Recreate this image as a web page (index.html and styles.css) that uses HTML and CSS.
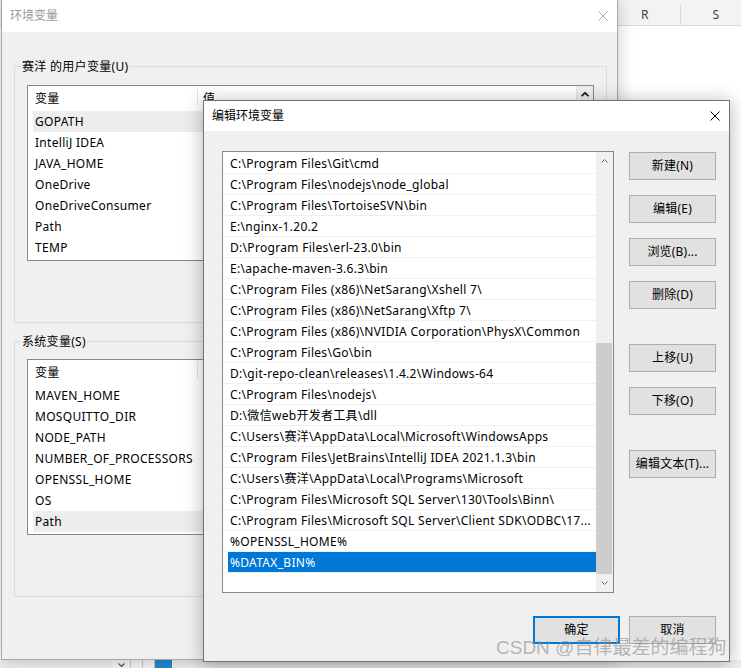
FILE: index.html
```html
<!DOCTYPE html>
<html lang="zh-CN">
<head>
<meta charset="utf-8">
<title>编辑环境变量</title>
<link rel="stylesheet" href="styles.css">
</head>
<body>
<div class="desktop">
  <div class="sheet-head">
    <div class="sheet-col">R</div>
    <div class="sheet-col">S</div>
  </div>
  <div class="sheet-body"></div>
  <div class="sheet-foot">
    <div class="foot-box foot-drop"><svg class="foot-chev" viewBox="0 0 7 4"><path d="M0.5 0.5L3.5 3.5L6.5 0.5"/></svg></div>
    <div class="foot-box foot-small"></div>
    <div class="foot-box foot-small"></div>
    <div class="foot-blue"></div>
  </div>

  <div class="win win-back">
    <div class="titlebar inactive">
      <span class="title">环境变量</span>
      <svg class="close" viewBox="0 0 10 10"><path d="M0.5 0.5L9.5 9.5M9.5 0.5L0.5 9.5"/></svg>
    </div>
    <div class="back-body">
      <div class="group group-user">
        <span class="group-label">赛洋 的用户变量(U)</span>
        <div class="listview">
          <div class="lv-main">
            <div class="lv-head">
              <div class="lv-col lv-name">变量</div>
              <div class="lv-sep"></div>
              <div class="lv-col lv-value">值</div>
            </div>
            <div class="lv-row sel">GOPATH</div>
            <div class="lv-row">IntelliJ IDEA</div>
            <div class="lv-row">JAVA_HOME</div>
            <div class="lv-row">OneDrive</div>
            <div class="lv-row">OneDriveConsumer</div>
            <div class="lv-row">Path</div>
            <div class="lv-row">TEMP</div>
          </div>
          <div class="lv-scroll">
            <div class="sb-btn"><svg class="chev bold" viewBox="0 0 7 4"><path d="M0.5 3.5L3.5 0.5L6.5 3.5"/></svg></div>
          </div>
        </div>
      </div>
      <div class="group group-sys">
        <span class="group-label">系统变量(S)</span>
        <div class="listview">
          <div class="lv-main">
            <div class="lv-head">
              <div class="lv-col lv-name">变量</div>
              <div class="lv-sep"></div>
              <div class="lv-col lv-value">值</div>
            </div>
            <div class="lv-row">MAVEN_HOME</div>
            <div class="lv-row">MOSQUITTO_DIR</div>
            <div class="lv-row">NODE_PATH</div>
            <div class="lv-row">NUMBER_OF_PROCESSORS</div>
            <div class="lv-row">OPENSSL_HOME</div>
            <div class="lv-row">OS</div>
            <div class="lv-row sel">Path</div>
          </div>
          <div class="lv-scroll"></div>
        </div>
      </div>
    </div>
  </div>

  <div class="win win-front">
    <div class="titlebar">
      <span class="title">编辑环境变量</span>
      <svg class="close" viewBox="0 0 10 10"><path d="M0.5 0.5L9.5 9.5M9.5 0.5L0.5 9.5"/></svg>
    </div>
    <div class="front-body">
      <div class="front-main">
        <div class="pathlist">
          <div class="pl-rows">
            <div class="pl-row"><div class="pl-text">C:\Program Files\Git\cmd</div></div>
            <div class="pl-row"><div class="pl-text">C:\Program Files\nodejs\node_global</div></div>
            <div class="pl-row"><div class="pl-text">C:\Program Files\TortoiseSVN\bin</div></div>
            <div class="pl-row"><div class="pl-text">E:\nginx-1.20.2</div></div>
            <div class="pl-row"><div class="pl-text">D:\Program Files\erl-23.0\bin</div></div>
            <div class="pl-row"><div class="pl-text">E:\apache-maven-3.6.3\bin</div></div>
            <div class="pl-row"><div class="pl-text">C:\Program Files (x86)\NetSarang\Xshell 7\</div></div>
            <div class="pl-row"><div class="pl-text">C:\Program Files (x86)\NetSarang\Xftp 7\</div></div>
            <div class="pl-row"><div class="pl-text">C:\Program Files (x86)\NVIDIA Corporation\PhysX\Common</div></div>
            <div class="pl-row"><div class="pl-text">C:\Program Files\Go\bin</div></div>
            <div class="pl-row"><div class="pl-text">D:\git-repo-clean\releases\1.4.2\Windows-64</div></div>
            <div class="pl-row"><div class="pl-text">C:\Program Files\nodejs\</div></div>
            <div class="pl-row"><div class="pl-text">D:\微信web开发者工具\dll</div></div>
            <div class="pl-row"><div class="pl-text">C:\Users\赛洋\AppData\Local\Microsoft\WindowsApps</div></div>
            <div class="pl-row"><div class="pl-text">C:\Program Files\JetBrains\IntelliJ IDEA 2021.1.3\bin</div></div>
            <div class="pl-row"><div class="pl-text">C:\Users\赛洋\AppData\Local\Programs\Microsoft</div></div>
            <div class="pl-row"><div class="pl-text">C:\Program Files\Microsoft SQL Server\130\Tools\Binn\</div></div>
            <div class="pl-row"><div class="pl-text">C:\Program Files\Microsoft SQL Server\Client SDK\ODBC\17...</div></div>
            <div class="pl-row"><div class="pl-text">%OPENSSL_HOME%</div></div>
            <div class="pl-row sel"><div class="pl-text">%DATAX_BIN%</div></div>
          </div>
          <div class="pl-scroll">
            <div class="sb-btn"><svg class="chev" viewBox="0 0 7 4"><path d="M0.5 3.5L3.5 0.5L6.5 3.5"/></svg></div>
            <div class="sb-track"><div class="sb-thumb"></div></div>
            <div class="sb-btn"><svg class="chev" viewBox="0 0 7 4"><path d="M0.5 0.5L3.5 3.5L6.5 0.5"/></svg></div>
          </div>
        </div>
        <div class="btn-col">
          <button class="btn">新建(N)</button>
          <button class="btn">编辑(E)</button>
          <button class="btn">浏览(B)...</button>
          <button class="btn">删除(D)</button>
          <button class="btn btn-gap">上移(U)</button>
          <button class="btn">下移(O)</button>
          <button class="btn btn-gap">编辑文本(T)...</button>
        </div>
      </div>
      <div class="front-foot">
        <button class="btn btn-default">确定</button>
        <button class="btn">取消</button>
      </div>
    </div>
  </div>

  <div class="watermark">CSDN @自律最差的编程狗</div>
</div>
</body>
</html>
```

FILE: styles.css
```css
* { box-sizing: border-box; }
html, body { margin: 0; padding: 0; }
body {
  width: 741px;
  height: 668px;
  overflow: hidden;
  background: #fff;
  color: #000;
  font-family: "Noto Sans", "Noto Sans CJK SC", sans-serif;
  font-size: 12px;
  line-height: 1.4;
  letter-spacing: 0.3px;
}
.desktop {
  position: relative;
  width: 741px;
  height: 668px;
  display: flex;
  flex-direction: column;
  overflow: hidden;
}

/* spreadsheet behind the dialogs */
.sheet-head {
  flex: none;
  height: 26px;
  background: #f3f3f3;
  border-bottom: 1px solid #d8d8d8;
  display: flex;
  align-items: flex-end;
  padding-left: 610px;
}
.sheet-col {
  flex: none;
  width: 71px;
  height: 20px;
  line-height: 20px;
  border-right: 1px solid #d8d8d8;
  text-align: center;
  color: #444;
  font-size: 12px;
}
.sheet-body { flex: 1; }
.sheet-foot {
  flex: none;
  height: 8px;
  background: #f0f0f0;
  display: flex;
  padding-left: 112px;
}
.foot-box {
  background: #f8f8f8;
  border-right: 1px solid #c8c8c8;
}
.foot-drop {
  width: 19px;
  display: flex;
  justify-content: center;
  padding-top: 3px;
}
.foot-chev {
  width: 7px;
  height: 4px;
  display: block;
  fill: none;
  stroke: #555;
  stroke-width: 1.2;
}
.foot-small { width: 12px; }
.foot-blue {
  width: 17px;
  background: #1f8ad2;
}

/* windows */
.win {
  position: absolute;
  display: flex;
  flex-direction: column;
  background: #f0f0f0;
}
.win-back {
  left: 1px;
  top: -1px;
  width: 617px;
  height: 661px;
  border: 1px solid #a8a8a8;
  box-shadow: 0 2px 16px rgba(0, 0, 0, 0.22);
}
.win-front {
  left: 203px;
  top: 100px;
  width: 527px;
  height: 562px;
  border: 1px solid #737373;
  box-shadow: 0 2px 18px rgba(0, 0, 0, 0.3);
}
.titlebar {
  flex: none;
  background: #fff;
  display: flex;
  align-items: center;
  padding: 0 9px 0 8px;
}
.win-back .titlebar { height: 32px; }
.win-front .titlebar { height: 30px; }
.title { font-size: 12px; line-height: 16px; letter-spacing: 0; }
.inactive .title { color: #999; }
.close {
  margin-left: auto;
  width: 10px;
  height: 10px;
  display: block;
  fill: none;
  stroke: #000;
  stroke-width: 1;
}
.inactive .close { stroke: #a6a6a6; }

/* back dialog */
.back-body {
  padding: 34px 0 0 12px;
}
.group {
  border: 1px solid #dcdcdc;
  width: 593px;
  padding: 0 12px;
}
.group-user { height: 257px; }
.group-sys { height: 256px; margin-top: 18px; }
.group-label {
  display: block;
  width: fit-content;
  margin: -9px 0 0 -6px;
  padding: 0 1px;
  background: #f0f0f0;
  line-height: 17px;
}
.group-user .listview { margin-top: 10px; }
.group-sys .listview { margin-top: 9px; }
.listview {
  height: 176px;
  border: 1px solid #828790;
  background: #fff;
  display: flex;
}
.lv-main { flex: 1; min-width: 0; }
.lv-head {
  height: 25px;
  display: flex;
  align-items: flex-start;
}
.lv-col { line-height: 25px; }
.lv-name { width: 169px; padding-left: 7px; }
.lv-sep {
  width: 1px;
  height: 18px;
  margin-top: 1px;
  background: #e3e3e3;
}
.lv-value { padding-left: 5px; }
.lv-row {
  height: 21px;
  line-height: 21px;
  margin-left: 5px;
  padding-left: 2px;
  white-space: nowrap;
}
.lv-row.sel { background: #ededed; }
.lv-scroll {
  width: 17px;
  background: #f0f0f0;
  border-left: 1px solid #e6e6e6;
}

/* scrollbar parts */
.sb-btn {
  flex: none;
  height: 17px;
  display: flex;
  align-items: center;
  justify-content: center;
}
.chev {
  width: 7px;
  height: 4px;
  display: block;
  fill: none;
  stroke: #606060;
  stroke-width: 1;
}
.chev.bold { stroke: #222; stroke-width: 1.6; width: 8px; height: 5px; }

/* front dialog */
.front-body {
  flex: 1;
  padding: 20px 13px 0 18px;
  display: flex;
  flex-direction: column;
}
.front-main { display: flex; }
.pathlist {
  width: 392px;
  height: 442px;
  border: 1px solid #828790;
  background: #fff;
  display: flex;
}
.pl-rows { flex: 1; min-width: 0; padding-top: 1px; }
.pl-row {
  height: 21px;
  border-bottom: 1px solid #f0f0f0;
  padding-left: 5px;
}
.pl-text {
  height: 20px;
  line-height: 21px;
  padding-left: 2px;
  white-space: nowrap;
  overflow: hidden;
}
.pl-row.sel .pl-text { background: #0078d7; color: #fff; }
.pl-scroll {
  width: 17px;
  background: #f0f0f0;
  display: flex;
  flex-direction: column;
}
.pl-scroll .sb-btn:last-child { margin-bottom: 1px; }
.sb-track {
  flex: 1;
  display: flex;
  flex-direction: column;
}
.sb-thumb {
  margin-top: auto;
  height: 231px;
  margin-right: 1px;
  background: #cdcdcd;
}
.btn-col {
  margin-left: 15px;
  padding-top: 1px;
  display: flex;
  flex-direction: column;
  gap: 15px;
}
.btn {
  width: 87px;
  height: 28px;
  padding: 0;
  margin: 0;
  background: #e1e1e1;
  border: 1px solid #adadad;
  color: #000;
  font-family: inherit;
  font-size: 12px;
  letter-spacing: 0.2px;
  line-height: 26px;
  text-align: center;
  white-space: nowrap;
}
.btn-gap { margin-top: 20px; }
.front-foot {
  display: flex;
  justify-content: flex-end;
  gap: 9px;
  margin-top: 23px;
}
.btn-default {
  border: 2px solid #0078d7;
  line-height: 24px;
}

.watermark {
  position: absolute;
  left: 496px;
  top: 637px;
  font-family: "Liberation Sans", "Noto Sans CJK SC", sans-serif;
  font-size: 19px;
  line-height: 22px;
  letter-spacing: 0;
  color: rgba(140, 140, 140, 0.62);
  white-space: nowrap;
}
```
